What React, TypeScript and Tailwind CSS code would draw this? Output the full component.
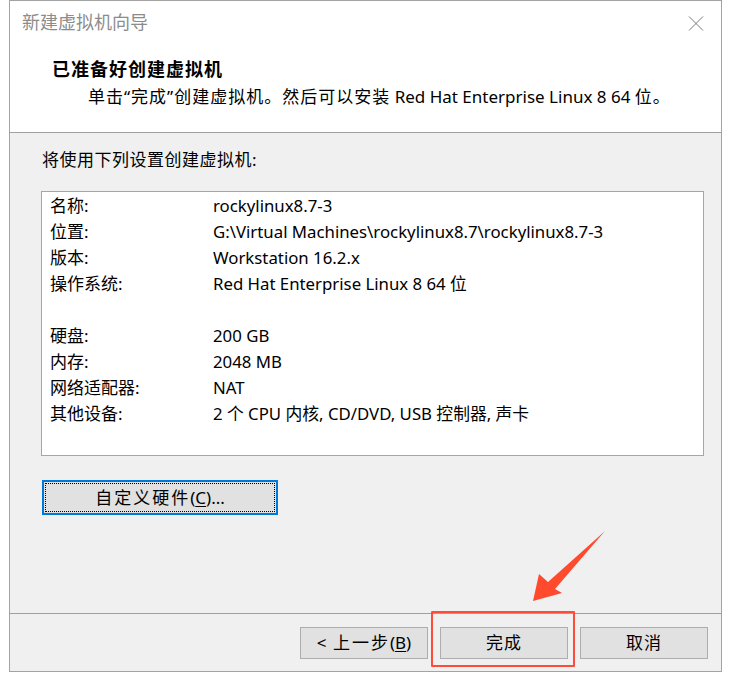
import React from 'react';

const font = { fontFamily: '"Noto Sans", "Noto Sans CJK SC", sans-serif' };

const rows: [string, string][] = [
  ['名称:', 'rockylinux8.7-3'],
  ['位置:', 'G:\\Virtual Machines\\rockylinux8.7\\rockylinux8.7-3'],
  ['版本:', 'Workstation 16.2.x'],
  ['操作系统:', 'Red Hat Enterprise Linux 8 64 位'],
  ['', ''],
  ['硬盘:', '200 GB'],
  ['内存:', '2048 MB'],
  ['网络适配器:', 'NAT'],
  ['其他设备:', '2 个 CPU 内核, CD/DVD, USB 控制器, 声卡'],
];

function WizardButton({ children }: { children: React.ReactNode }) {
  return (
    <button className="w-[128px] h-[32px] bg-[#e1e1e1] border border-[#adadad] text-[17px] text-black flex items-center justify-center">
      {children}
    </button>
  );
}

export default function App() {
  return (
    <div className="w-[732px] h-[683px] bg-white relative text-black" style={font}>
      <div className="ml-[9px] w-[713px] h-[672px] border border-[#a3a3a3] flex flex-col">
        {/* header */}
        <div className="h-[132px] bg-white border-b border-[#a0a0a0] relative">
          <div className="h-[44px] pl-[12px] pt-[9px] text-[18px] leading-[24px] text-[#8c8c8c]">新建虚拟机向导</div>
          <svg className="absolute left-[678px] top-[15px]" width="16" height="15" viewBox="0 0 16 15">
            <path d="M1 0.5 L15 14.5 M15 0.5 L1 14.5" stroke="#7a7a7a" strokeWidth="1" fill="none" />
          </svg>
          <div className="pl-[42px] pt-[11px] text-[18px] leading-[26px] font-bold tracking-[1px]">已准备好创建虚拟机</div>
          <div className="pl-[78px] pt-[2px] text-[17px] leading-[26px]">
            <span className="tracking-[1px]">单击“完成”创建虚拟机。然后可以安装</span> Red Hat Enterprise Linux 8 64{' '}
            <span className="tracking-[1px]">位。</span>
          </div>
        </div>

        {/* body */}
        <div className="flex-1 bg-[#f0f0f0] flex flex-col">
          <div className="pl-[32px] pt-[15px] text-[17px] leading-[24px] tracking-[0.5px]">将使用下列设置创建虚拟机:</div>
          <div className="ml-[31px] mt-[19px] w-[663px] h-[265px] bg-white border border-[#a6a6a6] pt-[1px]">
            {rows.map(([label, value], i) => (
              <div key={i} className="flex h-[26px] items-center text-[17px]">
                <div className="w-[171px] pl-[8px]">{label}</div>
                <div className="text-[16.8px]">{value}</div>
              </div>
            ))}
          </div>
          <div className="ml-[32px] mt-[24px] w-[236px] h-[35px] border-2 border-[#0078d7] bg-[#e1e1e1] p-[1px]">
            <div className="w-full h-full border border-dotted border-black flex items-center justify-center text-[17px]">
              <span className="tracking-[2px]">自定义硬件</span>(<span className="underline underline-offset-2">C</span>)...
            </div>
          </div>
        </div>

        {/* footer */}
        <div className="h-[58px] bg-[#f0f0f0] border-t border-[#a0a0a0] flex justify-end items-start gap-[12px] pt-[13px] pr-[13px]">
          <WizardButton>
            &lt;&nbsp;<span className="tracking-[2px] ml-[2px]">上一步</span>(<span className="underline underline-offset-2">B</span>)
          </WizardButton>
          <WizardButton>
            <span className="tracking-[1px]">完成</span>
          </WizardButton>
          <WizardButton>
            <span className="tracking-[1px]">取消</span>
          </WizardButton>
        </div>
      </div>

      {/* annotation overlay */}
      <div className="absolute left-[431px] top-[611px] w-[144px] h-[56px] border-2 border-[#ff4b3a] rounded-[1px]" />
      <svg className="absolute left-0 top-0 pointer-events-none" width="732" height="683">
        <polygon
          points="533,601 539,574 548,582 605,531 555,589 562,593"
          fill="#ff4a2e"
        />
      </svg>
    </div>
  );
}
